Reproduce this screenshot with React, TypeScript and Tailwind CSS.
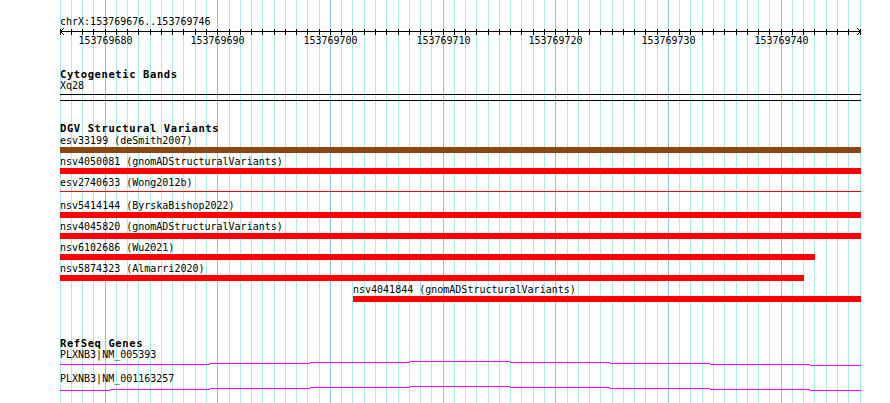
import React from 'react';

const START = 153769676;
const END = 153769746;
const LEFT = 60;
const BASES = END - START + 1;
const PX = 800 / BASES;

const gx = (i: number) => Math.floor(LEFT + i * PX) + 0.5;
const barLeft = (from: number) => Math.round(LEFT + from * PX) - LEFT;
const barRight = (to: number) => Math.floor(LEFT + to * PX) + 1 - LEFT;

interface Variant {
  label: string;
  from: number;
  to: number;
  color: string;
  thin?: boolean;
}

const variants: Variant[] = [
  { label: 'esv33199 (deSmith2007)', from: 0, to: 71, color: '#8b4513' },
  { label: 'nsv4050081 (gnomADStructuralVariants)', from: 0, to: 71, color: '#ff0000' },
  { label: 'esv2740633 (Wong2012b)', from: 0, to: 71, color: '#ff0000', thin: true },
  { label: 'nsv5414144 (ByrskaBishop2022)', from: 0, to: 71, color: '#ff0000' },
  { label: 'nsv4045820 (gnomADStructuralVariants)', from: 0, to: 71, color: '#ff0000' },
  { label: 'nsv6102686 (Wu2021)', from: 0, to: 67, color: '#ff0000' },
  { label: 'nsv5874323 (Almarri2020)', from: 0, to: 66, color: '#ff0000' },
  { label: 'nsv4041844 (gnomADStructuralVariants)', from: 26, to: 71, color: '#ff0000' },
];

// step segments of the transcript lines: [x1, x2, y offset]
const genes: { label: string; segs: number[][] }[] = [
  {
    label: 'PLXNB3|NM_005393',
    segs: [[60, 210, 3], [210, 310, 2], [310, 410, 1], [410, 510, 0], [510, 610, 1], [610, 710, 2], [710, 810, 3], [810, 861, 4]],
  },
  {
    label: 'PLXNB3|NM_001163257',
    segs: [[60, 110, 5], [110, 210, 4], [210, 310, 3], [310, 410, 2], [410, 510, 1], [510, 610, 2], [610, 710, 3], [710, 810, 4], [810, 861, 5]],
  },
];

const idx = Array.from({ length: BASES + 1 }, (_, i) => i);

const Grid = () => (
  <svg className="absolute left-0 top-0" width={890} height={403} shapeRendering="crispEdges">
    {idx.map(i => (
      <line
        key={i}
        x1={gx(i)}
        x2={gx(i)}
        y1={0}
        y2={403}
        stroke={(START + i) % 10 === 0 ? '#84c6e6' : '#aaeaee'}
        strokeWidth={1}
      />
    ))}
  </svg>
);

const Ruler = () => (
  <svg width={890} height={46} className="block" shapeRendering="crispEdges">
    <text x={60} y={25} fontSize={10} fill="#000">
      chrX:{START}..{END}
    </text>
    <line x1={60} x2={861} y1={31.5} y2={31.5} stroke="#000" />
    {idx.map(i => (
      <line key={i} x1={gx(i)} x2={gx(i)} y1={29} y2={35} stroke="#000" />
    ))}
    <polyline points="64,28 60.5,31.5 64,35" fill="none" stroke="#000" shapeRendering="auto" />
    <polyline points="857,28 860.5,31.5 857,35" fill="none" stroke="#000" shapeRendering="auto" />
    {idx
      .filter(i => (START + i) % 10 === 0)
      .map(i => (
        <text key={i} x={gx(i)} y={44} fontSize={10} textAnchor="middle" fill="#000">
          {START + i}
        </text>
      ))}
  </svg>
);

const Heading = ({ children }: { children: React.ReactNode }) => (
  <div className="h-[12px] text-[10.5px] leading-[12px] font-bold tracking-[0.6px] whitespace-nowrap">
    {children}
  </div>
);

const VariantRow = ({ v }: { v: Variant }) => {
  const left = barLeft(v.from);
  const width = barRight(v.to) - left;
  return (
    <div className="mb-[3px]">
      <div className="h-[12px] leading-[12px] whitespace-nowrap" style={{ paddingLeft: left }}>
        {v.label}
      </div>
      <div className="h-[6px]">
        {v.thin ? (
          <div className="mt-[2px] h-px" style={{ marginLeft: left, width, background: v.color }} />
        ) : (
          <div className="h-[6px]" style={{ marginLeft: left, width, background: v.color }} />
        )}
      </div>
    </div>
  );
};

export default function App() {
  return (
    <div className="relative w-[890px] h-[403px] overflow-hidden bg-white text-black font-['DejaVu_Sans_Mono',monospace] text-[10px]">
      <Grid />
      <div className="relative">
        <Ruler />

        <div className="pl-[60px] w-[861px]">
          {/* Cytogenetic Bands */}
          <div className="mt-[22px]">
            <Heading>Cytogenetic Bands</Heading>
            <div className="h-[12px] leading-[12px]">Xq28</div>
            <div className="mt-[2px] h-[7px] border-y border-black" />
          </div>

          {/* DGV Structural Variants */}
          <div className="mt-[21px]">
            <Heading>DGV Structural Variants</Heading>
            <div className="mt-px">
              {variants.map(v => (
                <VariantRow key={v.label} v={v} />
              ))}
            </div>
          </div>

          {/* RefSeq Genes */}
          <div className="mt-[35px]">
            <Heading>RefSeq Genes</Heading>
            {genes.map(g => (
              <div key={g.label}>
                <div className="h-[12px] leading-[12px] whitespace-nowrap">{g.label}</div>
                <svg width={801} height={12} className="block" shapeRendering="crispEdges">
                  {g.segs.map(([a, b, y]) => (
                    <rect key={a} x={a - 60} y={y} width={b - a} height={1} fill="#ff00ff" />
                  ))}
                </svg>
              </div>
            ))}
          </div>
        </div>
      </div>
    </div>
  );
}
